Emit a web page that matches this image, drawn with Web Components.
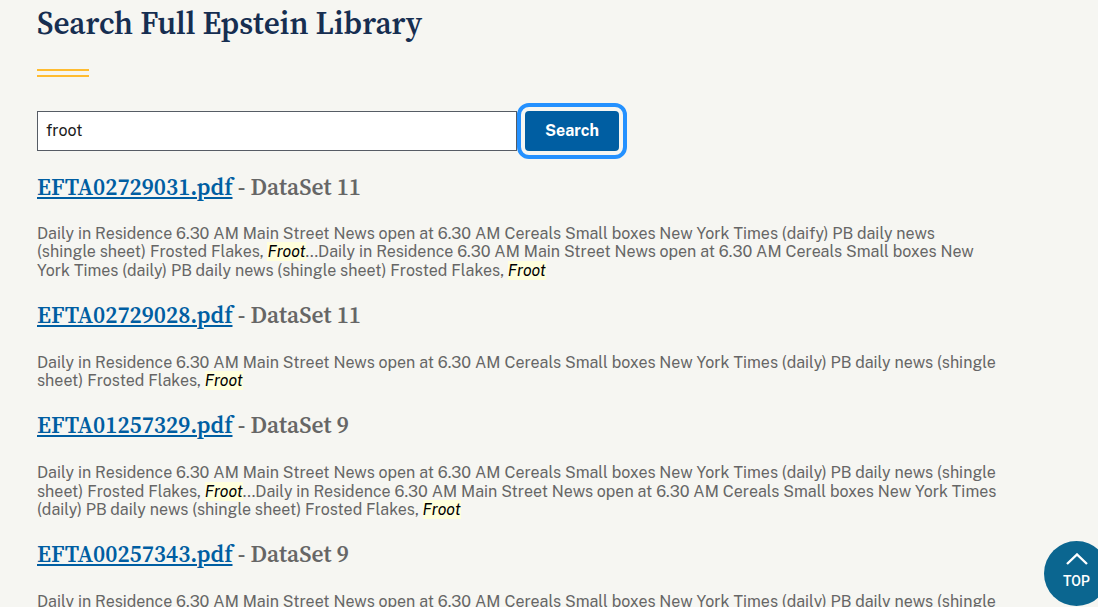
<!DOCTYPE html>
<html lang="en">
<head>
<meta charset="utf-8">
<title>Search Full Epstein Library</title>
<style>
  html, body { margin: 0; height: 100%; overflow: hidden; background: #f6f6f2; }
</style>
</head>
<body>
<library-page>
  <search-form value="froot"></search-form>
  <search-result file="EFTA02729031.pdf" dataset="DataSet 11">Daily in Residence 6.30 AM Main Street News open at 6.30 AM Cereals Small boxes New York Times (daify) PB daily news (shingle sheet) Frosted Flakes, <search-hit>Froot</search-hit>...Daily in Residence 6.30 AM Main Street News open at 6.30 AM Cereals Small boxes New York Times (daily) PB daily news (shingle sheet) Frosted Flakes, <search-hit>Froot</search-hit></search-result>
  <search-result file="EFTA02729028.pdf" dataset="DataSet 11">Daily in Residence 6.30 AM Main Street News open at 6.30 AM Cereals Small boxes New York Times (daily) PB daily news (shingle sheet) Frosted Flakes, <search-hit>Froot</search-hit></search-result>
  <search-result file="EFTA01257329.pdf" dataset="DataSet 9">Daily in Residence 6.30 AM Main Street News open at 6.30 AM Cereals Small boxes New York Times (daily) PB daily news (shingle sheet) Frosted Flakes, <search-hit>Froot</search-hit>...Daily in Residence 6.30 AM Main Street News open at 6.30 AM Cereals Small boxes New York Times (daily) PB daily news (shingle sheet) Frosted Flakes, <search-hit>Froot</search-hit></search-result>
  <search-result file="EFTA00257343.pdf" dataset="DataSet 9">Daily in Residence 6.30 AM Main Street News open at 6.30 AM Cereals Small boxes New York Times (daily) PB daily news (shingle sheet) Frosted Flakes, <search-hit>Froot</search-hit></search-result>
</library-page>
<back-to-top></back-to-top>

<script>
const SANS = '"Public Sans", Inter, "Liberation Sans", sans-serif';
const SERIF = '"Source Serif 4", "Source Serif Pro", "Liberation Serif", serif';

class LibraryPage extends HTMLElement {
  constructor() {
    super();
    this.attachShadow({ mode: 'open' }).innerHTML = `
      <style>
        :host { display: block; box-sizing: border-box; padding: 0 37px; }
        h1 {
          margin: 0;
          padding-top: 4px;
          font: 600 31.3px/38px ${SERIF};
          color: #162e51;
        }
        .rule {
          width: 52px;
          height: 4px;
          margin: 27px 0 34px;
          border-top: 2px solid #ffbc31;
          border-bottom: 2px solid #ffbc31;
        }
        .results { display: flex; flex-direction: column; padding-top: 1.5px; }
      </style>
      <h1>Search Full Epstein Library</h1>
      <div class="rule"></div>
      <slot name="form"></slot>
      <div class="results"><slot></slot></div>
    `;
  }
  connectedCallback() {
    const form = this.querySelector('search-form');
    if (form) form.slot = 'form';
  }
}

class SearchForm extends HTMLElement {
  constructor() {
    super();
    this.attachShadow({ mode: 'open' }).innerHTML = `
      <style>
        :host { display: flex; gap: 8px; align-items: stretch; height: 40px; }
        input {
          box-sizing: border-box;
          width: 480px;
          height: 40px;
          margin: 0;
          padding: 0 8px 2px;
          border: 1px solid #565c65;
          border-radius: 0;
          background: #fff;
          color: #1b1b1b;
          font: 16px ${SANS};
          outline: none;
        }
        button {
          box-sizing: border-box;
          width: 94px;
          height: 40px;
          padding: 0 0 2px;
          border: 0;
          border-radius: 4px;
          background: #005ea2;
          color: #fff;
          font: bold 16px ${SANS};
          outline: 4px solid #2491ff;
          outline-offset: 4px;
        }
      </style>
      <input type="text" aria-label="Search">
      <button type="button">Search</button>
    `;
    this.shadowRoot.querySelector('input').value = this.getAttribute('value') || '';
  }
}

class SearchResult extends HTMLElement {
  constructor() {
    super();
    this.attachShadow({ mode: 'open' }).innerHTML = `
      <style>
        :host { display: block; }
        h3 {
          margin: 0;
          padding-top: 21.5px;
          font: 600 23.36px/26px ${SERIF};
          color: #666;
        }
        a { color: #005ea2; text-decoration: underline; }
        p {
          margin: 0;
          padding: 26.2px 0 0;
          max-width: 960px;
          font: 16px/18.4px ${SANS};
          color: #666;
        }
        :host(:first-of-type) p { padding-top: 25px; }
      </style>
      <h3><a href="#"></a> - <span></span></h3>
      <p><slot></slot></p>
    `;
    this.shadowRoot.querySelector('a').textContent = this.getAttribute('file');
    this.shadowRoot.querySelector('span').textContent = this.getAttribute('dataset');
  }
}

// no whitespace around the slot, the host is inline
class SearchHit extends HTMLElement {
  constructor() {
    super();
    this.attachShadow({ mode: 'open' }).innerHTML = `<style>:host { display: inline; background: #ffffdc; color: #000; font-style: italic; }</style><slot></slot>`;
  }
}

class BackToTop extends HTMLElement {
  constructor() {
    super();
    this.attachShadow({ mode: 'open' }).innerHTML = `
      <style>
        :host {
          position: fixed;
          left: 1044px;
          top: 541px;
          width: 65px;
          height: 65px;
          border-radius: 50%;
          background: #0b6690;
          color: #fff;
          display: flex;
          flex-direction: column;
          align-items: center;
          box-sizing: border-box;
          padding: 12px 0 0;
        }
        svg { display: block; }
        span { font: 500 14px/16px Roboto, ${SANS}; margin-top: 8px; }
      </style>
      <svg width="22" height="12" viewBox="0 0 22 12"><path d="M1 11 L11 1.5 L21 11" fill="none" stroke="#fff" stroke-width="2.4"/></svg>
      <span>TOP</span>
    `;
  }
}

customElements.define('library-page', LibraryPage);
customElements.define('search-form', SearchForm);
customElements.define('search-result', SearchResult);
customElements.define('search-hit', SearchHit);
customElements.define('back-to-top', BackToTop);
</script>
</body>
</html>
